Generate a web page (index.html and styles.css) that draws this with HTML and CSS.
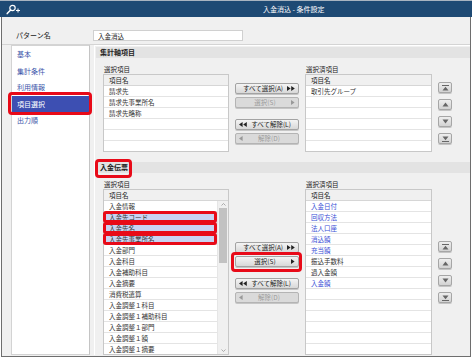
FILE: index.html
```html
<!DOCTYPE html>
<html lang="ja">
<head>
    <meta charset="UTF-8">
    <meta name="viewport" content="width=device-width, initial-scale=1.0">
    <title>入金消込 - 条件設定</title>
    <link rel="stylesheet" href="styles.css">
</head>
<body>
    <div class="window">
        <div class="titlebar">
            <svg class="title-icon" width="16" height="11" viewBox="0 0 16 11">
                <circle cx="7.5" cy="4" r="2.7" fill="none" stroke="#fff" stroke-width="1.2"/>
                <path d="M5.6 6L2.2 9.6" stroke="#fff" stroke-width="1.5" stroke-linecap="round"/>
                <path d="M11 6.5h4M13 4.5v4" stroke="#fff" stroke-width="1"/>
            </svg>
            <span class="title">入金消込 - 条件設定</span>
        </div>

        <div class="window-body">
            <div class="pattern-row">
                <label class="pattern-label" for="patternName">パターン名</label>
                <input class="pattern-input" id="patternName" type="text" value="入金消込">
            </div>

            <div class="content">
                <ul class="side-nav">
                    <li>基本</li>
                    <li>集計条件</li>
                    <li>利用情報</li>
                    <li class="active marked">項目選択</li>
                    <li>出力順</li>
                </ul>

                <div class="main-panel">
                    <!-- 集計軸項目 -->
                    <div class="group">
                        <div class="group-head"><span>集計軸項目</span></div>
                        <div class="group-body">
                            <div class="list-label label-left">選択項目</div>
                            <div class="list-label label-right">選択済項目</div>

                            <div class="item-list list-left">
                                <div class="list-head">項目名</div>
                                <div class="list-rows">
                                    <div class="row">請求先</div>
                                    <div class="row">請求先事業所名</div>
                                    <div class="row">請求先略称</div>
                                    <div class="row"></div>
                                    <div class="row"></div>
                                    <div class="row"></div>
                                </div>
                            </div>

                            <div class="move-buttons">
                                <button class="btn"><span class="btn-text">すべて選択(A)</span>
                                    <svg class="btn-icon" width="8" height="5" viewBox="0 0 8 5"><path d="M0 0L3.6 2.5L0 5ZM4.2 0L7.8 2.5L4.2 5Z"/></svg>
                                </button>
                                <button class="btn" disabled><span class="btn-text">選択(S)</span>
                                    <svg class="btn-icon" width="4" height="5" viewBox="0 0 4 5"><path d="M0 0L3.6 2.5L0 5Z"/></svg>
                                </button>
                                <button class="btn spaced">
                                    <svg class="btn-icon" width="8" height="5" viewBox="0 0 8 5"><path d="M3.6 0L0 2.5L3.6 5ZM7.8 0L4.2 2.5L7.8 5Z"/></svg>
                                    <span class="btn-text">すべて解除(L)</span>
                                </button>
                                <button class="btn" disabled>
                                    <svg class="btn-icon" width="4" height="5" viewBox="0 0 4 5"><path d="M3.6 0L0 2.5L3.6 5Z"/></svg>
                                    <span class="btn-text">解除(D)</span>
                                </button>
                            </div>

                            <div class="item-list list-right">
                                <div class="list-head">項目名</div>
                                <div class="list-rows">
                                    <div class="row">取引先グループ</div>
                                    <div class="row"></div>
                                    <div class="row"></div>
                                    <div class="row"></div>
                                    <div class="row"></div>
                                    <div class="row"></div>
                                </div>
                            </div>

                            <div class="order-buttons">
                                <button class="order-btn"><svg width="7" height="6" viewBox="0 0 7 6"><path d="M0 0h7v1H0zM3.5 1.8L6.5 5.5H0.5z"/></svg></button>
                                <button class="order-btn"><svg width="7" height="5" viewBox="0 0 7 5"><path d="M3.5 0.5L6.5 4.5H0.5z"/></svg></button>
                                <button class="order-btn"><svg width="7" height="5" viewBox="0 0 7 5"><path d="M0.5 0.5H6.5L3.5 4.5z"/></svg></button>
                                <button class="order-btn"><svg width="7" height="6" viewBox="0 0 7 6"><path d="M0.5 0.5H6.5L3.5 4.2zM0 5h7v1H0z"/></svg></button>
                            </div>
                        </div>
                    </div>

                    <!-- 入金伝票 -->
                    <div class="group">
                        <div class="group-head"><span class="marked">入金伝票</span></div>
                        <div class="group-body">
                            <div class="list-label label-left">選択項目</div>
                            <div class="list-label label-right">選択済項目</div>

                            <div class="item-list list-left">
                                <div class="list-head">項目名</div>
                                <div class="list-body">
                                    <div class="list-rows">
                                        <div class="row">入金情報</div>
                                        <div class="row picked marked">入金先コード</div>
                                        <div class="row picked marked">入金先名</div>
                                        <div class="row picked marked">入金先事業所名</div>
                                        <div class="row">入金部門</div>
                                        <div class="row">入金科目</div>
                                        <div class="row">入金補助科目</div>
                                        <div class="row">入金摘要</div>
                                        <div class="row">消費税遣算</div>
                                        <div class="row">入金調整１科目</div>
                                        <div class="row">入金調整１補助科目</div>
                                        <div class="row">入金調整１部門</div>
                                        <div class="row">入金調整１額</div>
                                        <div class="row">入金調整１摘要</div>
                                    </div>
                                    <div class="scrollbar">
                                        <div class="sb-arrow"><svg width="5" height="3" viewBox="0 0 5 3"><path d="M0.5 2.5L2.5 0.5L4.5 2.5" fill="none" stroke="#9a9a9a" stroke-width="0.8"/></svg></div>
                                        <div class="sb-thumb"></div>
                                        <div class="sb-track"></div>
                                        <div class="sb-arrow"><svg width="5" height="3" viewBox="0 0 5 3"><path d="M0.5 0.5L2.5 2.5L4.5 0.5" fill="none" stroke="#9a9a9a" stroke-width="0.8"/></svg></div>
                                    </div>
                                </div>
                            </div>

                            <div class="move-buttons">
                                <button class="btn"><span class="btn-text">すべて選択(A)</span>
                                    <svg class="btn-icon" width="8" height="5" viewBox="0 0 8 5"><path d="M0 0L3.6 2.5L0 5ZM4.2 0L7.8 2.5L4.2 5Z"/></svg>
                                </button>
                                <button class="btn marked"><span class="btn-text">選択(S)</span>
                                    <svg class="btn-icon" width="4" height="5" viewBox="0 0 4 5"><path d="M0 0L3.6 2.5L0 5Z"/></svg>
                                </button>
                                <button class="btn spaced">
                                    <svg class="btn-icon" width="8" height="5" viewBox="0 0 8 5"><path d="M3.6 0L0 2.5L3.6 5ZM7.8 0L4.2 2.5L7.8 5Z"/></svg>
                                    <span class="btn-text">すべて解除(L)</span>
                                </button>
                                <button class="btn" disabled>
                                    <svg class="btn-icon" width="4" height="5" viewBox="0 0 4 5"><path d="M3.6 0L0 2.5L3.6 5Z"/></svg>
                                    <span class="btn-text">解除(D)</span>
                                </button>
                            </div>

                            <div class="item-list list-right">
                                <div class="list-head">項目名</div>
                                <div class="list-rows">
                                    <div class="row linked">入金日付</div>
                                    <div class="row linked">回収方法</div>
                                    <div class="row linked">法人口座</div>
                                    <div class="row linked">消込額</div>
                                    <div class="row linked">充当額</div>
                                    <div class="row">振込手数料</div>
                                    <div class="row">過入金額</div>
                                    <div class="row linked">入金額</div>
                                    <div class="row"></div>
                                    <div class="row"></div>
                                    <div class="row"></div>
                                    <div class="row"></div>
                                    <div class="row"></div>
                                    <div class="row"></div>
                                </div>
                            </div>

                            <div class="order-buttons">
                                <button class="order-btn"><svg width="7" height="6" viewBox="0 0 7 6"><path d="M0 0h7v1H0zM3.5 1.8L6.5 5.5H0.5z"/></svg></button>
                                <button class="order-btn"><svg width="7" height="5" viewBox="0 0 7 5"><path d="M3.5 0.5L6.5 4.5H0.5z"/></svg></button>
                                <button class="order-btn"><svg width="7" height="5" viewBox="0 0 7 5"><path d="M0.5 0.5H6.5L3.5 4.5z"/></svg></button>
                                <button class="order-btn"><svg width="7" height="6" viewBox="0 0 7 6"><path d="M0.5 0.5H6.5L3.5 4.2zM0 5h7v1H0z"/></svg></button>
                            </div>
                        </div>
                    </div>
                </div>
            </div>
        </div>
    </div>
</body>
</html>
```

FILE: styles.css
```css
* {
    box-sizing: border-box;
}
html, body {
    margin: 0;
    padding: 0;
    background-color: #fff;
}
body {
    font-family: "Noto Sans CJK JP", "Noto Sans", sans-serif;
    font-size: 7px;
    color: #222;
}
.window {
    width: 472px;
    height: 357px;
}
.titlebar {
    display: flex;
    align-items: center;
    height: 17px;
    background-color: #1e4a74;
    border-top: 1px solid #a8b4c0;
    color: #fff;
}
.title-icon {
    margin-left: 5px;
}
.title {
    margin-left: 242px;
    font-size: 7px;
    line-height: 16px;
}
.window-body {
    width: 470px;
    height: 340px;
    margin-left: 1px;
    background-color: #f0f0f0;
    border: 1px solid #6e6e6e;
    border-top: 0;
}
.pattern-row {
    display: flex;
    align-items: center;
    height: 28px;
    padding: 10px 0 0 14px;
    border-bottom: 1px solid #d4d4d4;
}
.pattern-label {
    width: 77px;
    line-height: 11px;
}
.pattern-input {
    width: 150px;
    height: 11px;
    margin: 0;
    padding: 0 4px;
    border: 1px solid #d0d0d0;
    background-color: #fff;
    font-family: inherit;
    font-size: 6.5px;
    color: #222;
}
.content {
    display: flex;
    height: 310px;
}
.side-nav {
    list-style: none;
    width: 79px;
    height: 310px;
    margin: 0 0 0 9px;
    padding: 0;
    background-color: #fff;
    border: 1px solid #d3d3d3;
    border-right-color: #c4c4c4;
}
.side-nav li {
    position: relative;
    height: 16.5px;
    line-height: 16.5px;
    padding-left: 5px;
    color: #3c56aa;
}
.side-nav li.active {
    background-color: #3d4fb2;
    color: #fff;
}
.marked {
    position: relative;
}
.marked::after {
    content: "";
    position: absolute;
    border: 3px solid #e80a18;
    border-radius: 4px;
    pointer-events: none;
}
.side-nav li.marked::after {
    top: -4px;
    bottom: -3px;
    left: -4px;
    right: -3px;
}
.main-panel {
    width: 376px;
    margin-left: 4px;
    padding: 1px 0 0 1px;
    border-left: 1px solid #fff;
    border-top: 1px solid #fff;
}
.group + .group {
    margin-top: 10px;
}
.group-head {
    height: 11px;
    padding-left: 4px;
    background-color: #e3e3e3;
    font-weight: bold;
    line-height: 11px;
}
.group-head .marked {
    display: inline-block;
}
.group-head .marked::after {
    top: -3px;
    bottom: -5px;
    left: -5px;
    right: -4px;
}
.group-body {
    display: grid;
    grid-template-columns: 126px 64px 127px 14px;
    grid-template-rows: 9px auto;
    column-gap: 6px;
    padding: 7px 0 0 7px;
}
.list-label {
    grid-row: 1;
    font-size: 6.5px;
    line-height: 9px;
    padding-left: 1px;
}
.label-left {
    grid-column: 1;
}
.label-right {
    grid-column: 3;
}
.item-list {
    grid-row: 2;
    background-color: #fff;
    border: 1px solid #c8c8c8;
    font-size: 6.5px;
}
.list-left {
    grid-column: 1;
}
.list-right {
    grid-column: 3;
}
.list-head {
    height: 11px;
    padding-left: 5px;
    line-height: 10px;
    background-color: #f0f0f0;
    border-bottom: 1px solid #d6d6d6;
}
.list-body {
    display: flex;
}
.list-rows {
    flex: 1;
}
.row {
    height: 11px;
    padding-left: 5px;
    line-height: 10px;
    border-bottom: 1px solid #e4e4e4;
    color: #333;
    white-space: nowrap;
}
.row:last-child {
    height: 10px;
    border-bottom: 0;
}
.row.linked {
    color: #3a4fd6;
}
.row.picked {
    background-color: #c9d3f2;
}
.row.marked::after {
    top: -1px;
    bottom: -1px;
    left: -1px;
    right: 0;
    border-radius: 3px;
}
.scrollbar {
    display: flex;
    flex-direction: column;
    width: 11px;
    background-color: #f0f0f0;
    border-left: 1px solid #e6e6e6;
}
.sb-arrow {
    display: flex;
    align-items: center;
    justify-content: center;
    height: 7px;
}
.sb-thumb {
    height: 55px;
    margin: 0 1px;
    background-color: #c2c2c2;
}
.sb-track {
    flex: 1;
}
.move-buttons {
    grid-column: 2;
    grid-row: 2;
    align-self: center;
    display: flex;
    flex-direction: column;
}
.btn {
    display: flex;
    align-items: center;
    height: 11px;
    margin: 0;
    padding: 0 3px;
    border: 1px solid #a3a3a3;
    border-radius: 2px;
    background: linear-gradient(#f4f4f4, #d8d8d8);
    box-shadow: 0 1px 0 #c6c6c6;
    font-family: inherit;
    font-size: 6.5px;
    line-height: 9px;
    color: #222;
    cursor: pointer;
}
.btn + .btn {
    margin-top: 3px;
}
.btn.spaced {
    margin-top: 11px;
}
.btn-text {
    flex: 1;
    text-align: center;
    white-space: nowrap;
}
.btn-icon {
    flex: none;
    fill: #222;
}
.btn:disabled {
    background: #dadada;
    border-color: #b4b4b4;
    color: #9a9a9a;
    cursor: default;
}
.btn:disabled .btn-icon {
    fill: #999;
}
.btn.marked::after {
    top: -5px;
    bottom: -6px;
    left: -5px;
    right: -4px;
}
.order-buttons {
    grid-column: 4;
    grid-row: 2;
    align-self: center;
    display: flex;
    flex-direction: column;
    gap: 6px;
}
.order-btn {
    display: flex;
    align-items: center;
    justify-content: center;
    width: 14px;
    height: 11px;
    margin: 0;
    padding: 0;
    border: 1px solid #a6a6a6;
    border-radius: 2px;
    background: linear-gradient(#eeeeee, #d2d2d2);
    box-shadow: 0 1px 0 #c4c4c4;
    fill: #666;
    cursor: pointer;
}
```
